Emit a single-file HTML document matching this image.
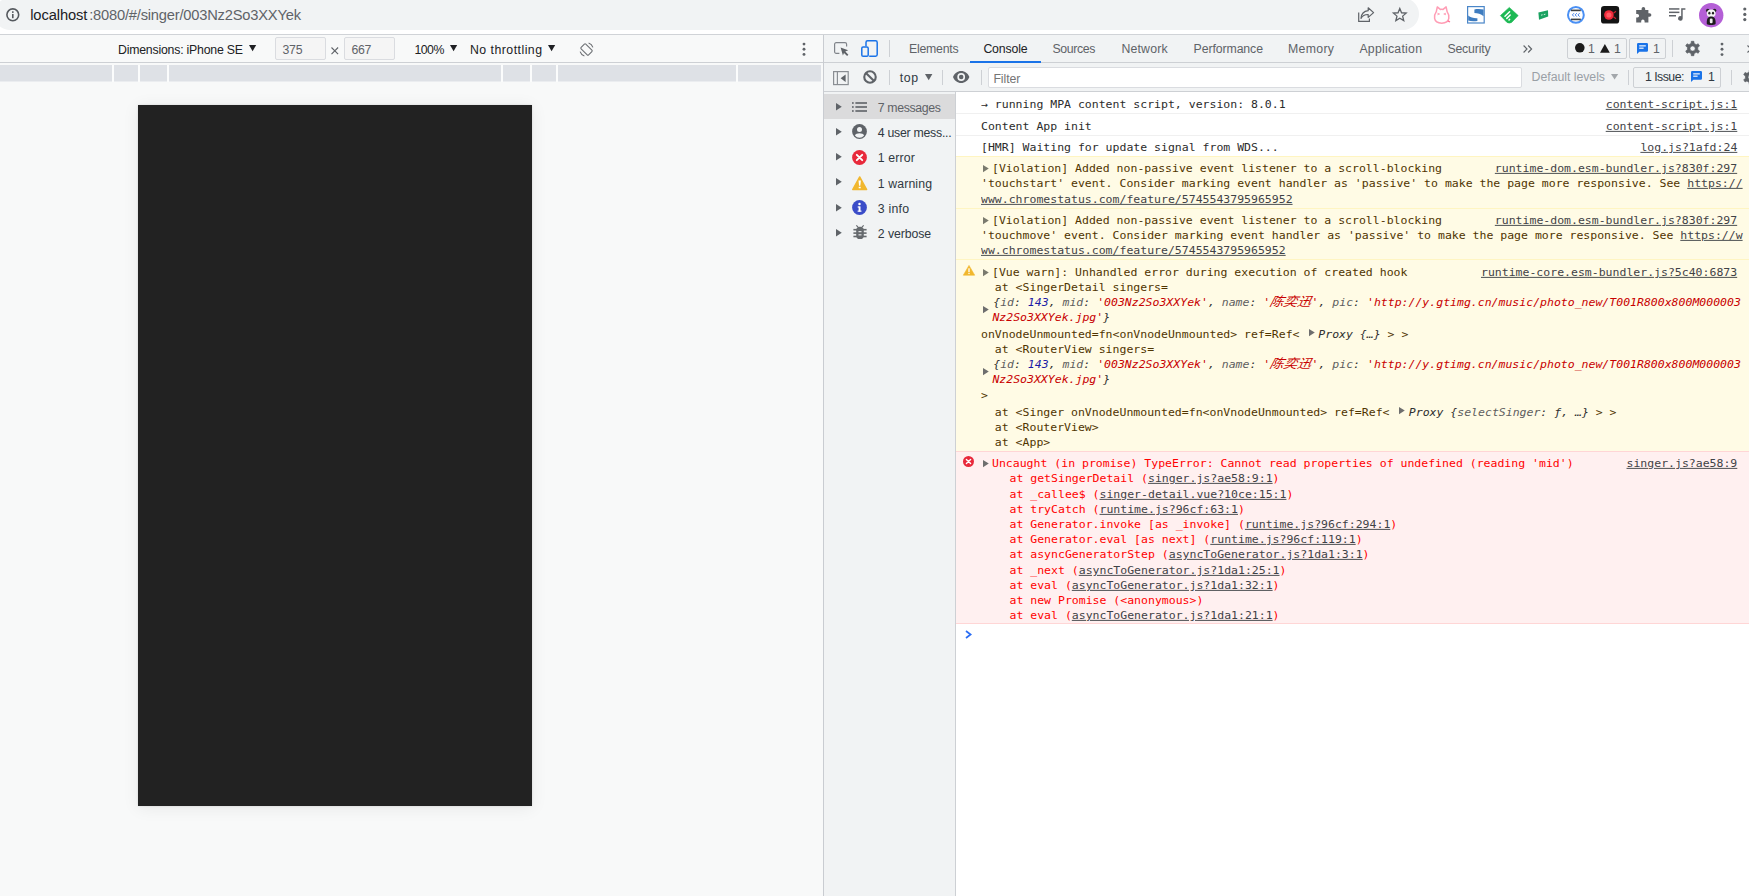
<!DOCTYPE html>
<html lang="en">
<head>
<meta charset="utf-8">
<title>DevTools - localhost:8080/#/singer/003Nz2So3XXYek</title>
<style>
*{box-sizing:border-box;margin:0;padding:0}
html,body{width:1749px;height:896px;overflow:hidden;background:#fff}
body{position:relative;font-family:"Liberation Sans",sans-serif;font-size:12.6px;color:#303942}
.a{position:absolute}
.t{position:absolute;white-space:pre;line-height:16px;height:16px}
.m{position:absolute;white-space:pre;font-family:"DejaVu Sans Mono","Noto Sans CJK SC",monospace;font-size:11.5px;line-height:15px;height:15px;color:#2b2b2b;transform:scaleY(.925);transform-origin:0 10.6px}
.u{text-decoration:underline;text-underline-offset:1px}
svg{position:absolute;overflow:visible}
/* ---------- browser top ---------- */
#omni{left:-6px;top:-2px;width:1425px;height:32px;border-radius:16px;background:#f1f3f4}
#topline{left:0;top:34px;width:1749px;height:1px;background:#d0d3d7}
/* ---------- device pane ---------- */
#devpane{left:0;top:35px;width:823px;height:861px;background:#f8f9f9}
#devbar-b{left:0;top:62px;width:823px;height:1px;background:#cdd0d4}
#media{left:0;top:65px;width:821px;height:17px;background:linear-gradient(#dee1e6 0,#dee1e6 16px,#ebedf0 16px)}
.ms{position:absolute;top:65px;width:2px;height:17px;background:#fbfcfc}
.inp{position:absolute;top:37px;width:51px;height:23px;border:1px solid #dadce0;border-radius:2px;background:#f5f5f5}
#screen{left:138px;top:105px;width:394px;height:701px;background:#222;box-shadow:0 0 2px rgba(0,0,0,.12),0 2px 16px rgba(0,0,0,.07)}
/* ---------- devtools ---------- */
#split{left:823px;top:35px;width:1px;height:861px;background:#c9ccd1}
#dtbar{left:824px;top:35px;width:925px;height:27px;background:#f1f3f4}
#dtbar-b{left:824px;top:62px;width:925px;height:1px;background:#cdd0d4}
#cbar{left:824px;top:63px;width:925px;height:28px;background:#f1f3f4}
#cbar-b{left:824px;top:91px;width:925px;height:1px;background:#cdd0d4}
.vd{position:absolute;width:1px;background:#cdd0d4}
#side{left:824px;top:92px;width:131px;height:804px;background:#f1f3f4}
#side-b{left:955px;top:92px;width:1px;height:804px;background:#cdd0d4}
#sel{left:824px;top:94px;width:131px;height:25px;background:#dbdbdc}
#cons{left:956px;top:92px;width:793px;height:804px;background:#fff}
.bx{border:1px solid #cdd0d4;border-radius:2px}
.w{color:#4f3400}
.e{color:#ff0000}
.lk{color:#3f4246}
.m i{font-style:italic;color:#303030}
.k{color:#5e5e5e}
.n{color:#1a1aa6}
.s{color:#c80000}
.cj{font-size:13.75px;line-height:1px;display:inline-block;transform:skewX(-13deg)}
</style>
</head>
<body>
<!-- browser toolbar -->
<div class="a" id="omni"></div>
<div class="a" id="topline"></div>
<svg style="left:6.2px;top:7.7px" width="13.6" height="13.6" viewBox="0 0 13.6 13.6"><circle cx="6.8" cy="6.8" r="5.900" fill="none" stroke="#55595e" stroke-width="1.600"/><rect x="6" y="6" width="1.600" height="4.200" fill="#55595e"/><rect x="6" y="3.300" width="1.600" height="1.600" fill="#55595e"/></svg>
<svg style="left:1358.4px;top:7.2px" width="16.6" height="15" viewBox="0 0 16.6 15"><g fill="none" stroke="#5f6368" stroke-width="1.2"><path d="M.7 5.6V14.3H11.4V11.6"/><path d="M10.2 .8L15.6 5.6L10.2 10.4V7.5C6.6 7.4 4.4 8.6 3 11.4C3.3 7.4 5.8 4.2 10.2 3.7z" stroke-linejoin="round"/></g></svg>
<svg style="left:0px;top:0px" width="1749" height="40" viewBox="0 0 1749 40"><path d="M1399.80 8.50L1401.56 12.77L1406.17 13.13L1402.65 16.13L1403.74 20.62L1399.80 18.20L1395.86 20.62L1396.95 16.13L1393.43 13.13L1398.04 12.77z" fill="none" stroke="#5f6368" stroke-width="1.3" stroke-linejoin="miter"/></svg>
<svg style="left:1433.2px;top:6px" width="17.6" height="18" viewBox="0 0 17.6 18"><path d="M3.300 5.600L4.300 .9L7.300 3.400Q8.700 3.100 10.100 3.400L13.100 .9L14.100 5.600Q16.400 8.800 15.800 12.400Q15 17 8.700 17.200Q2.400 17 1.600 12.400Q1 8.800 3.300 5.600z" fill="#fff" stroke="#ff9db5" stroke-width="1.500" stroke-linejoin="round"/><path d="M4.400 7.200L6.600 8L4.400 8.800M13 7.200L10.800 8L13 8.800" fill="none" stroke="#ff9db5" stroke-width=".9"/><path d="M14.800 15L17 15.800" stroke="#ff7a9c" stroke-width="1.400"/></svg>
<svg style="left:1467.2px;top:6.2px" width="17.8" height="17.6" viewBox="0 0 17.8 17.6"><rect x=".6" y=".6" width="16.600" height="16.400" fill="#fdfeff" stroke="#4a86c8" stroke-width="1.200"/><path d="M7.400 3.400C10.500 2.600 14 2.800 16.600 3.600V10.200C14 8 10.500 7.200 7.400 7z" fill="#3d7cc0"/><path d="M1.200 9.600C3.500 11.600 7 12.400 10.400 12.200V15C7 15.600 3.500 15.400 1.200 14.600z" fill="#3d7cc0"/></svg>
<svg style="left:1499.8px;top:6.8px" width="18.6" height="16.4" viewBox="0 0 18.6 16.4"><path d="M9.3 .4L18.2 8.6L11.6 15.4Q9.3 16.8 7 15.4L.4 8.600z" fill="#1db954" stroke="#1db954" stroke-width=".6" stroke-linejoin="round"/><g stroke="#fff" stroke-width="1.5" stroke-linecap="round"><path d="M5 9.200L9.600 4.800"/><path d="M6.800 11.400L10.200 8"/><path d="M9 13L9.600 12.400"/></g></svg>
<svg style="left:1537.6px;top:10px" width="10.6" height="10.2" viewBox="0 0 10.6 10.2"><path d="M.4 2.600L10 .2L10.200 6.400L1 9.800z" fill="#1aa260"/><path d="M3 5.200L4.600 4.800M5.800 4.600L7.400 4.200" stroke="#c8f0da" stroke-width="1"/></svg>
<svg style="left:1567.2px;top:6.2px" width="17.8" height="17.8" viewBox="0 0 17.8 17.8"><circle cx="8.9" cy="8.9" r="7.9" fill="#fff" stroke="#4a90f4" stroke-width="2"/><rect x="4" y="3.600" width="9.800" height="1.600" fill="#3c4043"/><rect x="4" y="12.600" width="9.800" height="1.600" fill="#3c4043"/><path d="M7 7.200L5.400 8.900L7 10.600M9.800 7.200L8.200 8.900L9.800 10.600M12.600 7.200L11 8.900L12.600 10.600" fill="none" stroke="#3f7ee8" stroke-width="1"/></svg>
<svg style="left:1601px;top:6px" width="18.2" height="17.6" viewBox="0 0 18.2 17.6"><rect x="0" y="0" width="18.200" height="17.600" rx="3.200" fill="#141414"/><circle cx="7.900" cy="9" r="4.800" fill="#f02a3a"/><circle cx="7.900" cy="9" r="2.600" fill="#ff5a64"/><path d="M12.400 7.200L15 5.200M12.400 10.800L15 12.800" stroke="#c8202c" stroke-width="1.200"/></svg>
<svg style="left:1635.6px;top:6.8px" width="15.4" height="15.6" viewBox="0 0 15.4 15.6"><path d="M5.600 1.800A1.800 1.800 0 0 1 9.200 1.800V3H12.400V6.200H13.600A1.800 1.800 0 0 1 13.600 9.800H12.400V15.400H8.600V14.200A1.700 1.700 0 0 0 5.200 14.200V15.400H.200V10.400H1.400A1.700 1.700 0 0 0 1.400 7H.2V3H5.600z" fill="#5f6368"/></svg>
<svg style="left:1669px;top:8px" width="16.4" height="12.8" viewBox="0 0 16.4 12.8"><g fill="#5f6368"><rect x="0" y=".2" width="10.400" height="1.500"/><rect x="0" y="3.600" width="10.400" height="1.500"/><rect x="0" y="7" width="7" height="1.500"/><path d="M12.200 .2H16.400V1.800H13.700V10.400A2.300 2.300 0 1 1 12.200 8.200z"/></g></svg>
<svg style="left:1698.8px;top:2.7px" width="24.4" height="24.4" viewBox="0 0 24.4 24.4"><circle cx="12.200" cy="12.200" r="12.200" fill="#b45fd6"/><g><circle cx="8.800" cy="7.600" r="1.800" fill="#222"/><circle cx="15.600" cy="7.600" r="1.800" fill="#222"/><ellipse cx="12.200" cy="10.400" rx="4.400" ry="3.800" fill="#f4f4f4"/><ellipse cx="10.400" cy="10.200" rx="1.100" ry="1.400" fill="#222"/><ellipse cx="14" cy="10.200" rx="1.100" ry="1.400" fill="#222"/><path d="M7.800 21C7.400 16 9 13.600 12.200 13.600S17 16 16.600 21C15 22.400 9.400 22.400 7.800 21z" fill="#1c1c1c"/><rect x="10.800" y="15.600" width="2.800" height="4.600" rx="1.200" fill="#eee"/></g></svg>
<svg style="left:1742.8px;top:7.4px" width="4" height="15" viewBox="0 0 4 15"><g fill="#5f6368"><circle cx="1.800" cy="2" r="1.600"/><circle cx="1.800" cy="7.400" r="1.600"/><circle cx="1.800" cy="12.600" r="1.600"/></g></svg>

<!-- device emulation pane -->
<div class="a" id="devpane"></div>
<div class="a" id="devbar-b"></div>
<div class="a" id="media"></div>
<div class="a" id="screen"></div>
<svg style="left:249px;top:45.4px" width="7.2" height="6.2" viewBox="0 0 7.2 6.2"><path d="M0 0H7.2L3.6 6.2z" fill="#202124"/></svg>
<div class="inp" style="left:275px"></div><div class="inp" style="left:344px"></div>
<svg style="left:331.4px;top:47.4px" width="7.6" height="7.6" viewBox="0 0 7.6 7.6"><path d="M.5 .5L7.1 7.1M7.1 .5L.5 7.1" stroke="#5f6368" stroke-width="1.1" fill="none"/></svg>
<svg style="left:450.2px;top:45.4px" width="7.2" height="6.2" viewBox="0 0 7.2 6.2"><path d="M0 0H7.2L3.6 6.2z" fill="#202124"/></svg>
<svg style="left:548px;top:45.4px" width="7.2" height="6.2" viewBox="0 0 7.2 6.2"><path d="M0 0H7.2L3.6 6.2z" fill="#202124"/></svg>
<svg style="left:578.5px;top:41.5px" width="15" height="15" viewBox="0 0 15 15"><g fill="none" stroke="#6e7175" stroke-width="1.1"><rect x="4.2" y="2.2" width="6.6" height="10.6" rx="1" transform="rotate(-45 7.5 7.5)"/><path d="M9.6 1.1A6.6 6.6 0 0 1 13.9 5.4M5.4 13.9A6.6 6.6 0 0 1 1.1 9.6"/></g></svg>
<svg style="left:801.5px;top:42px" width="4" height="15" viewBox="0 0 4 15"><g fill="#5f6368"><circle cx="2" cy="2.1" r="1.45"/><circle cx="2" cy="7.2" r="1.45"/><circle cx="2" cy="12.4" r="1.45"/></g></svg>
<div class="ms" style="left:112px"></div>
<div class="ms" style="left:138px"></div>
<div class="ms" style="left:167px"></div>
<div class="ms" style="left:501px"></div>
<div class="ms" style="left:530px"></div>
<div class="ms" style="left:556px"></div>
<div class="ms" style="left:736px"></div>

<!-- devtools -->
<div class="a" id="split"></div>
<div class="a" id="dtbar"></div>
<div class="a" id="dtbar-b"></div>
<div class="a" id="cbar"></div>
<div class="a" id="cbar-b"></div>
<div class="a" id="side"></div>
<div class="a" id="side-b"></div>
<div class="a" id="sel"></div>
<div class="a" id="cons"></div>
<svg style="left:834.4px;top:42.1px" width="15" height="14" viewBox="0 0 15 14"><path d="M5.4 11.4H2.2A1.6 1.6 0 0 1 .6 9.8V2.2A1.6 1.6 0 0 1 2.2 .6H11A1.6 1.6 0 0 1 12.6 2.2V4.6" fill="none" stroke="#80848a" stroke-width="1.2"/><path d="M6.6 5.6L14.2 8.3L11.3 9.6L14.4 12.7L13.1 14L10 10.9L8.9 13.6z" fill="#5f6368"/></svg>
<svg style="left:860.8px;top:40px" width="17" height="17" viewBox="0 0 17 17"><g fill="none" stroke="#1a73e8" stroke-width="1.5"><path d="M5 6.2V2.4A1.6 1.6 0 0 1 6.6 .8H14.6A1.6 1.6 0 0 1 16.2 2.4V14.6A1.6 1.6 0 0 1 14.6 16.2H8.2"/><rect x=".8" y="7" width="6.4" height="9.2" rx="1.3"/></g></svg>
<div class="vd" style="left:889px;top:40px;height:17px"></div>
<div class="a" style="left:970px;top:60.5px;width:70.5px;height:2px;background:#1a73e8"></div>
<svg style="left:1523.4px;top:44.6px" width="9.4" height="8" viewBox="0 0 9.4 8"><path d="M.6 .5L4 4L.6 7.5M5.2 .5L8.6 4L5.2 7.5" fill="none" stroke="#5f6368" stroke-width="1.15"/></svg>
<div class="a bx" style="left:1567px;top:38px;width:60px;height:21px"></div>
<div class="a bx" style="left:1629px;top:38px;width:37px;height:21px"></div>
<svg style="left:1574.6px;top:43.4px" width="9.6" height="9.6" viewBox="0 0 9.6 9.6"><circle cx="4.8" cy="4.8" r="4.8" fill="#1b1b1b"/></svg>
<svg style="left:1599.6px;top:44px" width="9.8" height="8.8" viewBox="0 0 9.8 8.8"><path d="M4.9 0L9.8 8.8H0z" fill="#1b1b1b"/></svg>
<svg style="left:1637.2px;top:43.3px" width="11" height="11" viewBox="0 0 11 11"><path d="M1.2 0H9.8A1.2 1.2 0 0 1 11 1.2V7.6A1.2 1.2 0 0 1 9.8 8.8H2.4L0 11V1.2A1.2 1.2 0 0 1 1.2 0z" fill="#1a73e8"/><rect x="2.2" y="2.3" width="6.6" height="1.15" fill="#fff"/><rect x="2.2" y="4.6" width="4.4" height="1.15" fill="#fff"/></svg>
<div class="vd" style="left:1672px;top:40px;height:17px"></div>
<svg style="left:0px;top:0px" width="1749" height="896" viewBox="0 0 1749 896"><path d="M1691.31 41.32L1693.89 41.32L1694.08 43.41L1696.27 44.67L1698.18 43.79L1699.47 46.03L1697.75 47.24L1697.75 49.76L1699.47 50.97L1698.18 53.21L1696.27 52.33L1694.08 53.59L1693.89 55.68L1691.31 55.68L1691.12 53.59L1688.93 52.33L1687.02 53.21L1685.73 50.97L1687.45 49.76L1687.45 47.24L1685.73 46.03L1687.02 43.79L1688.93 44.67L1691.12 43.41zM1690.00 48.50a2.6 2.6 0 1 0 5.2 0a2.6 2.6 0 1 0 -5.2 0z" fill="#5f6368" fill-rule="evenodd" stroke="#5f6368" stroke-width=".7" stroke-linejoin="round"/></svg>
<svg style="left:1720px;top:42px" width="4" height="15" viewBox="0 0 4 15"><g fill="#5f6368"><circle cx="2" cy="2.1" r="1.45"/><circle cx="2" cy="7.2" r="1.45"/><circle cx="2" cy="12.6" r="1.45"/></g></svg>
<svg style="left:1747.2px;top:44.5px" width="8" height="8" viewBox="0 0 8 8"><path d="M.5 .5L7.5 7.5M7.5 .5L.5 7.5" stroke="#5f6368" stroke-width="1.2" fill="none"/></svg>
<svg style="left:833px;top:71px" width="16" height="14.4" viewBox="0 0 16 14.4"><rect x=".6" y=".6" width="14.6" height="13" fill="none" stroke="#8a8e93" stroke-width="1.2"/><path d="M4.4 .6V13.6" stroke="#8a8e93" stroke-width="1.2"/><path d="M12.6 3.600V10.900L7.600 7.250z" fill="#5f6368"/></svg>
<svg style="left:863.1px;top:70.4px" width="14" height="14" viewBox="0 0 14 14"><circle cx="7" cy="7" r="5.750" fill="none" stroke="#5f6368" stroke-width="2.100"/><path d="M2.900 2.900L11.100 11.100" stroke="#5f6368" stroke-width="2.100"/></svg>
<div class="vd" style="left:889px;top:69.5px;height:15px"></div>
<svg style="left:925px;top:74.2px" width="7.4" height="6.2" viewBox="0 0 7.4 6.2"><path d="M0 0H7.4L3.7 6.2z" fill="#5f6368"/></svg>
<div class="vd" style="left:942px;top:69.5px;height:15px"></div>
<svg style="left:953.2px;top:71.2px" width="16.4" height="12" viewBox="0 0 16 11.4" preserveAspectRatio="none"><path d="M8 0C4.4 0 1.3 2.3 0 5.7C1.3 9.1 4.4 11.4 8 11.4S14.7 9.1 16 5.7C14.7 2.3 11.6 0 8 0zM8 9.5A3.8 3.8 0 1 1 8 1.9A3.8 3.8 0 0 1 8 9.5zM8 3.5A2.2 2.2 0 1 0 8 7.9A2.2 2.2 0 0 0 8 3.5z" fill="#5f6368" fill-rule="evenodd"/></svg>
<div class="vd" style="left:981px;top:69.5px;height:15px"></div>
<div class="a" style="left:988px;top:66.5px;width:533.5px;height:21px;background:#fff;border:1px solid #dadce0;border-radius:2px"></div>
<svg style="left:1610.8px;top:74.4px" width="7.2" height="5.6" viewBox="0 0 7.2 5.6"><path d="M0 0H7.2L3.6 5.6z" fill="#a3a7ab"/></svg>
<div class="vd" style="left:1628px;top:69.5px;height:15px"></div>
<div class="a bx" style="left:1633px;top:66.5px;width:88px;height:21px"></div>
<svg style="left:1691.2px;top:71px" width="11" height="11" viewBox="0 0 11 11"><path d="M1.2 0H9.8A1.2 1.2 0 0 1 11 1.2V7.6A1.2 1.2 0 0 1 9.8 8.8H2.4L0 11V1.2A1.2 1.2 0 0 1 1.2 0z" fill="#1a73e8"/><rect x="2.2" y="2.3" width="6.6" height="1.15" fill="#fff"/><rect x="2.2" y="4.6" width="4.4" height="1.15" fill="#fff"/></svg>
<div class="vd" style="left:1731px;top:69.5px;height:15px"></div>
<svg style="left:0px;top:0px" width="1749" height="896" viewBox="0 0 1749 896"><path d="M1749.31 70.02L1751.89 70.02L1752.08 72.11L1754.27 73.37L1756.18 72.49L1757.47 74.73L1755.75 75.94L1755.75 78.46L1757.47 79.67L1756.18 81.91L1754.27 81.03L1752.08 82.29L1751.89 84.38L1749.31 84.38L1749.12 82.29L1746.93 81.03L1745.02 81.91L1743.73 79.67L1745.45 78.46L1745.45 75.94L1743.73 74.73L1745.02 72.49L1746.93 73.37L1749.12 72.11zM1748.00 77.20a2.6 2.6 0 1 0 5.2 0a2.6 2.6 0 1 0 -5.2 0z" fill="#5f6368" fill-rule="evenodd" stroke="#5f6368" stroke-width=".7" stroke-linejoin="round"/></svg>
<svg style="left:836.2px;top:102.5px" width="5.8" height="7.4" viewBox="0 0 5.8 7.4"><path d="M0 0L5.8 3.7L0 7.4z" fill="#5f6368"/></svg>
<svg style="left:836.2px;top:127.89999999999999px" width="5.8" height="7.4" viewBox="0 0 5.8 7.4"><path d="M0 0L5.8 3.7L0 7.4z" fill="#5f6368"/></svg>
<svg style="left:836.2px;top:153.20000000000002px" width="5.8" height="7.4" viewBox="0 0 5.8 7.4"><path d="M0 0L5.8 3.7L0 7.4z" fill="#5f6368"/></svg>
<svg style="left:836.2px;top:178.4px" width="5.8" height="7.4" viewBox="0 0 5.8 7.4"><path d="M0 0L5.8 3.7L0 7.4z" fill="#5f6368"/></svg>
<svg style="left:836.2px;top:203.60000000000002px" width="5.8" height="7.4" viewBox="0 0 5.8 7.4"><path d="M0 0L5.8 3.7L0 7.4z" fill="#5f6368"/></svg>
<svg style="left:836.2px;top:228.70000000000002px" width="5.8" height="7.4" viewBox="0 0 5.8 7.4"><path d="M0 0L5.8 3.7L0 7.4z" fill="#5f6368"/></svg>
<svg style="left:852.2px;top:102.0px" width="15" height="10" viewBox="0 0 15 10"><g fill="#5f6368"><rect x="0" y=".2" width="1.7" height="1.6"/><rect x="0" y="4.2" width="1.7" height="1.6"/><rect x="0" y="8.2" width="1.7" height="1.6"/><rect x="3.4" y=".2" width="11.6" height="1.6"/><rect x="3.4" y="4.2" width="11.6" height="1.6"/><rect x="3.4" y="8.2" width="11.6" height="1.6"/></g></svg>
<svg style="left:852.2px;top:124.1px" width="15" height="15" viewBox="0 0 15 15"><circle cx="7.500" cy="7.500" r="7.400" fill="#5f6368"/><circle cx="7.500" cy="5.500" r="2.500" fill="#f1f3f4"/><path d="M2.900 11.500C3.300 10 5.600 9.300 7.500 9.300S11.700 10 12.100 11.500A5.900 5.900 0 0 1 2.900 11.500z" fill="#f1f3f4"/></svg>
<svg style="left:852.2px;top:149.5px" width="15" height="15" viewBox="0 0 15 15"><circle cx="7.5" cy="7.5" r="7.4" fill="#e8293b"/><path d="M4.8 4.8L10.2 10.2M10.2 4.8L4.8 10.2" stroke="#fff" stroke-width="1.9" stroke-linecap="round"/></svg>
<svg style="left:852.0px;top:175.5px" width="15.4" height="14.4" viewBox="0 0 15.4 14.4"><path d="M7.7 .9L14.7 13.5H.7z" fill="#f1b72e" stroke="#f1b72e" stroke-width="1.4" stroke-linejoin="round"/><path d="M6.5 4.4H8.900L8.300 9.800H7.100z" fill="#fff"/><rect x="6.700" y="10.800" width="2" height="1.500" fill="#fff"/></svg>
<svg style="left:852.2px;top:199.9px" width="15" height="15" viewBox="0 0 15 15"><circle cx="7.5" cy="7.5" r="7.4" fill="#3a4cc8"/><rect x="6.6" y="6.4" width="1.9" height="5.2" fill="#fff"/><rect x="5.7" y="6.4" width="1.8" height="1.2" fill="#fff"/><rect x="5.6" y="10.6" width="3.9" height="1.1" fill="#fff"/><circle cx="7.5" cy="3.9" r="1.25" fill="#fff"/></svg>
<svg style="left:852.7px;top:225.3px" width="14" height="14.6" viewBox="0 0 14 14.6"><g fill="#666a6e"><rect x="3.2" y="1.7" width="7.6" height="12.4" rx="3.6"/><rect x=".4" y="3.900" width="13.200" height="1.600"/><rect x=".4" y="7.300" width="13.200" height="1.600"/><rect x=".4" y="10.700" width="13.200" height="1.600"/><path d="M4.6 2.6L2.9 .7L3.8 0L5.6 2zM9.400 2.600L11.100 .7L10.200 0L8.400 2z"/></g><rect x="5.500" y="6.100" width="3" height="1.100" fill="#eceef0"/><rect x="5.500" y="9.300" width="3" height="1.100" fill="#eceef0"/></svg>
<div class="t" style="left:118.00px;top:41.74px;font-size:12.3px;color:#202124;letter-spacing:-0.209px">Dimensions: iPhone SE</div>
<div class="t" style="left:282.40px;top:41.74px;font-size:12.3px;color:#5f6368;letter-spacing:-0.158px">375</div>
<div class="t" style="left:351.40px;top:41.74px;font-size:12.3px;color:#5f6368;letter-spacing:-0.258px">667</div>
<div class="t" style="left:414.40px;top:41.74px;font-size:12.3px;color:#202124;letter-spacing:-0.484px">100%</div>
<div class="t" style="left:470.00px;top:41.74px;font-size:12.3px;color:#202124;letter-spacing:0.475px">No throttling</div>
<div class="t" style="left:909.00px;top:40.74px;font-size:12.3px;color:#5f6368;letter-spacing:-0.237px">Elements</div>
<div class="t" style="left:983.40px;top:40.74px;font-size:12.3px;color:#202124;letter-spacing:-0.153px">Console</div>
<div class="t" style="left:1052.40px;top:40.74px;font-size:12.3px;color:#5f6368;letter-spacing:-0.352px">Sources</div>
<div class="t" style="left:1121.40px;top:40.74px;font-size:12.3px;color:#5f6368;letter-spacing:0.184px">Network</div>
<div class="t" style="left:1193.60px;top:40.74px;font-size:12.3px;color:#5f6368;letter-spacing:-0.099px">Performance</div>
<div class="t" style="left:1288.00px;top:40.74px;font-size:12.3px;color:#5f6368;letter-spacing:0.318px">Memory</div>
<div class="t" style="left:1359.40px;top:40.74px;font-size:12.3px;color:#5f6368;letter-spacing:0.244px">Application</div>
<div class="t" style="left:1447.40px;top:40.74px;font-size:12.3px;color:#5f6368;letter-spacing:-0.174px">Security</div>
<div class="t" style="left:1588.00px;top:-7.71px;font-size:61.50px;line-height:80px;height:80px;color:#5f6368;transform:scale(0.2);transform-origin:0 61.31px">1</div>
<div class="t" style="left:1613.60px;top:-7.71px;font-size:61.50px;line-height:80px;height:80px;color:#5f6368;transform:scale(0.2);transform-origin:0 61.31px">1</div>
<div class="t" style="left:1652.80px;top:-7.71px;font-size:61.50px;line-height:80px;height:80px;color:#5f6368;transform:scale(0.2);transform-origin:0 61.31px">1</div>
<div class="t" style="left:899.80px;top:69.74px;font-size:12.3px;color:#303942;letter-spacing:0.553px">top</div>
<div class="t" style="left:993.40px;top:70.74px;font-size:12.3px;color:#757575;letter-spacing:-0.065px">Filter</div>
<div class="t" style="left:1531.60px;top:69.14px;font-size:12.3px;color:#9aa0a6;letter-spacing:-0.032px">Default levels</div>
<div class="t" style="left:1645.00px;top:69.14px;font-size:12.3px;color:#303942;letter-spacing:-0.523px">1 Issue:</div>
<div class="t" style="left:1707.60px;top:20.09px;font-size:61.50px;line-height:80px;height:80px;color:#303942;transform:scale(0.2);transform-origin:0 61.31px">1</div>
<div class="t" style="left:877.80px;top:99.64px;font-size:12.3px;color:#5f6368;letter-spacing:-0.344px">7 messages</div>
<div class="t" style="left:877.80px;top:125.04px;font-size:12.3px;color:#303942;letter-spacing:-0.263px">4 user mess...</div>
<div class="t" style="left:877.80px;top:150.34px;font-size:12.3px;color:#303942;letter-spacing:0.147px">1 error</div>
<div class="t" style="left:877.80px;top:175.54px;font-size:12.3px;color:#303942;letter-spacing:0.110px">1 warning</div>
<div class="t" style="left:877.80px;top:200.74px;font-size:12.3px;color:#303942;letter-spacing:0.224px">3 info</div>
<div class="t" style="left:877.80px;top:225.84px;font-size:12.3px;color:#303942;letter-spacing:-0.075px">2 verbose</div>
<div class="t" style="left:30.20px;top:6.91px;font-size:14.7px;color:#202124;letter-spacing:-0.096px">localhost</div>
<div class="t" style="left:89.20px;top:6.91px;font-size:14.7px;color:#5f6368;letter-spacing:-0.203px">:8080/#/singer/003Nz2So3XXYek</div>
<div class="a" style="left:956px;top:113px;width:793px;height:1px;background:#f0f0f0"></div>
<div class="a" style="left:956px;top:135px;width:793px;height:1px;background:#f0f0f0"></div>
<div class="a" style="left:956px;top:156px;width:793px;height:296px;background:#fffbe5"></div>
<div class="a" style="left:956px;top:156px;width:793px;height:1px;background:#fff5c2"></div>
<div class="a" style="left:956px;top:208px;width:793px;height:1px;background:#fff5c2"></div>
<div class="a" style="left:956px;top:259px;width:793px;height:1px;background:#fff5c2"></div>
<div class="a" style="left:956px;top:451px;width:793px;height:173px;background:#fff0f0"></div>
<div class="a" style="left:956px;top:451px;width:793px;height:1px;background:#ffd6d6"></div>
<div class="a" style="left:956px;top:623px;width:793px;height:1px;background:#ffd6d6"></div>
<div class="m" style="left:981.00px;top:97.00px">→ running MPA content script, version: 8.0.1</div>
<div class="m" style="left:1605.73px;top:97.00px"><span class="u lk">content-script.js:1</span></div>
<div class="m" style="left:981.00px;top:118.90px">Content App init</div>
<div class="m" style="left:1605.73px;top:118.90px"><span class="u lk">content-script.js:1</span></div>
<div class="m" style="left:981.00px;top:140.20px">[HMR] Waiting for update signal from WDS...</div>
<div class="m" style="left:1640.38px;top:140.20px"><span class="u lk">log.js?1afd:24</span></div>
<svg style="left:982.80px;top:164.50px" width="5.8" height="7.2" viewBox="0 0 5.8 7.2"><path d="M0 0L5.8 3.6L0 7.2z" fill="#7a7a6e"/></svg>
<div class="m w" style="left:992.00px;top:160.90px">[Violation] Added non-passive event listener to a scroll-blocking</div>
<div class="m" style="left:1494.85px;top:160.90px"><span class="u lk">runtime-dom.esm-bundler.js?830f:297</span></div>
<div class="m w" style="left:981.00px;top:176.20px">'touchstart' event. Consider marking event handler as 'passive' to make the page more responsive. See <span class="u lk">https://</span></div>
<div class="m w" style="left:981.00px;top:191.60px"><span class="u lk">www.chromestatus.com/feature/5745543795965952</span></div>
<svg style="left:982.80px;top:216.80px" width="5.8" height="7.2" viewBox="0 0 5.8 7.2"><path d="M0 0L5.8 3.6L0 7.2z" fill="#7a7a6e"/></svg>
<div class="m w" style="left:992.00px;top:213.20px">[Violation] Added non-passive event listener to a scroll-blocking</div>
<div class="m" style="left:1494.85px;top:213.20px"><span class="u lk">runtime-dom.esm-bundler.js?830f:297</span></div>
<div class="m w" style="left:981.00px;top:228.20px">'touchmove' event. Consider marking event handler as 'passive' to make the page more responsive. See <span class="u lk">https://w</span></div>
<div class="m w" style="left:981.00px;top:243.20px"><span class="u lk">ww.chromestatus.com/feature/5745543795965952</span></div>
<svg style="left:962.6px;top:265px" width="12" height="10.5" viewBox="0 0 12 10.5"><path d="M6 .4L11.7 10.2H.3z" fill="#f1b72e" stroke="#f1b72e" stroke-width=".6" stroke-linejoin="round"/><rect x="5.35" y="3.3" width="1.3" height="3.7" fill="#fff"/><rect x="5.35" y="7.8" width="1.3" height="1.3" fill="#fff"/></svg>
<svg style="left:982.80px;top:268.60px" width="5.8" height="7.2" viewBox="0 0 5.8 7.2"><path d="M0 0L5.8 3.6L0 7.2z" fill="#7a7a6e"/></svg>
<div class="m w" style="left:992.00px;top:265.00px">[Vue warn]: Unhandled error during execution of created hook</div>
<div class="m" style="left:1480.99px;top:265.00px"><span class="u lk">runtime-core.esm-bundler.js?5c40:6873</span></div>
<div class="m w" style="left:981.00px;top:280.00px">  at &lt;SingerDetail singers=</div>
<svg style="left:983.40px;top:306.20px" width="5.8" height="7.2" viewBox="0 0 5.8 7.2"><path d="M0 0L5.8 3.6L0 7.2z" fill="#6e6e6e"/></svg>
<div class="m w" style="left:993.20px;top:295.20px"><i>{<span class="k">id</span>: <span class="n">143</span>, <span class="k">mid</span>: <span class="s">'003Nz2So3XXYek'</span>, <span class="k">name</span>: <span class="s">'<span class="cj">陈奕迅</span>'</span>, <span class="k">pic</span>: <span class="s">'http://y.gtimg.cn/music/photo_new/T001R800x800M000003</span></i></div>
<div class="m w" style="left:992.40px;top:310.40px"><i><span class="s">Nz2So3XXYek.jpg'</span>}</i></div>
<div class="m w" style="left:981.00px;top:326.70px">onVnodeUnmounted=fn&lt;onVnodeUnmounted&gt; ref=Ref&lt; </div>
<svg style="left:1308.91px;top:328.50px" width="5.8" height="7.2" viewBox="0 0 5.8 7.2"><path d="M0 0L5.8 3.6L0 7.2z" fill="#6e6e6e"/></svg>
<div class="m w" style="left:1318.31px;top:326.70px"><i>Proxy {…}</i> &gt; &gt;</div>
<div class="m w" style="left:981.00px;top:342.20px">  at &lt;RouterView singers=</div>
<svg style="left:983.40px;top:367.90px" width="5.8" height="7.2" viewBox="0 0 5.8 7.2"><path d="M0 0L5.8 3.6L0 7.2z" fill="#6e6e6e"/></svg>
<div class="m w" style="left:993.20px;top:357.20px"><i>{<span class="k">id</span>: <span class="n">143</span>, <span class="k">mid</span>: <span class="s">'003Nz2So3XXYek'</span>, <span class="k">name</span>: <span class="s">'<span class="cj">陈奕迅</span>'</span>, <span class="k">pic</span>: <span class="s">'http://y.gtimg.cn/music/photo_new/T001R800x800M000003</span></i></div>
<div class="m w" style="left:992.40px;top:371.80px"><i><span class="s">Nz2So3XXYek.jpg'</span>}</i></div>
<div class="m w" style="left:981.00px;top:388.20px">&gt;</div>
<div class="m w" style="left:981.00px;top:405.00px">  at &lt;Singer onVnodeUnmounted=fn&lt;onVnodeUnmounted&gt; ref=Ref&lt; </div>
<svg style="left:1399.00px;top:406.80px" width="5.8" height="7.2" viewBox="0 0 5.8 7.2"><path d="M0 0L5.8 3.6L0 7.2z" fill="#6e6e6e"/></svg>
<div class="m w" style="left:1408.80px;top:405.00px"><i>Proxy {<span class="k">selectSinger</span>: ƒ, …}</i> &gt; &gt;</div>
<div class="m w" style="left:981.00px;top:420.10px">  at &lt;RouterView&gt;</div>
<div class="m w" style="left:981.00px;top:435.40px">  at &lt;App&gt;</div>
<svg style="left:963px;top:455.8px" width="11" height="11" viewBox="0 0 12 12"><circle cx="6" cy="6" r="6" fill="#e8293b"/><path d="M3.7 3.7L8.3 8.3M8.3 3.7L3.7 8.3" stroke="#fff" stroke-width="1.5" stroke-linecap="round"/></svg>
<svg style="left:982.80px;top:459.80px" width="5.8" height="7.2" viewBox="0 0 5.8 7.2"><path d="M0 0L5.8 3.6L0 7.2z" fill="#6e6e6e"/></svg>
<div class="m e" style="left:992.00px;top:456.10px">Uncaught (in promise) TypeError: Cannot read properties of undefined (reading 'mid')</div>
<div class="m" style="left:1626.52px;top:456.10px"><span class="u lk">singer.js?ae58:9</span></div>
<div class="m e" style="left:981.80px;top:471.30px">    at getSingerDetail (<span class="u lk">singer.js?ae58:9:1</span>)</div>
<div class="m e" style="left:981.80px;top:487.30px">    at _callee$ (<span class="u lk">singer-detail.vue?10ce:15:1</span>)</div>
<div class="m e" style="left:981.80px;top:502.40px">    at tryCatch (<span class="u lk">runtime.js?96cf:63:1</span>)</div>
<div class="m e" style="left:981.80px;top:517.40px">    at Generator.invoke [as _invoke] (<span class="u lk">runtime.js?96cf:294:1</span>)</div>
<div class="m e" style="left:981.80px;top:532.20px">    at Generator.eval [as next] (<span class="u lk">runtime.js?96cf:119:1</span>)</div>
<div class="m e" style="left:981.80px;top:547.30px">    at asyncGeneratorStep (<span class="u lk">asyncToGenerator.js?1da1:3:1</span>)</div>
<div class="m e" style="left:981.80px;top:562.50px">    at _next (<span class="u lk">asyncToGenerator.js?1da1:25:1</span>)</div>
<div class="m e" style="left:981.80px;top:577.60px">    at eval (<span class="u lk">asyncToGenerator.js?1da1:32:1</span>)</div>
<div class="m e" style="left:981.80px;top:592.70px">    at new Promise (&lt;anonymous&gt;)</div>
<div class="m e" style="left:981.80px;top:607.90px">    at eval (<span class="u lk">asyncToGenerator.js?1da1:21:1</span>)</div>
<svg style="left:965.2px;top:629.6px" width="7" height="9" viewBox="0 0 7 9"><path d="M1 1L5.6 4.5L1 8" fill="none" stroke="#2a6df4" stroke-width="1.7" stroke-linejoin="miter"/></svg>
</body>
</html>
